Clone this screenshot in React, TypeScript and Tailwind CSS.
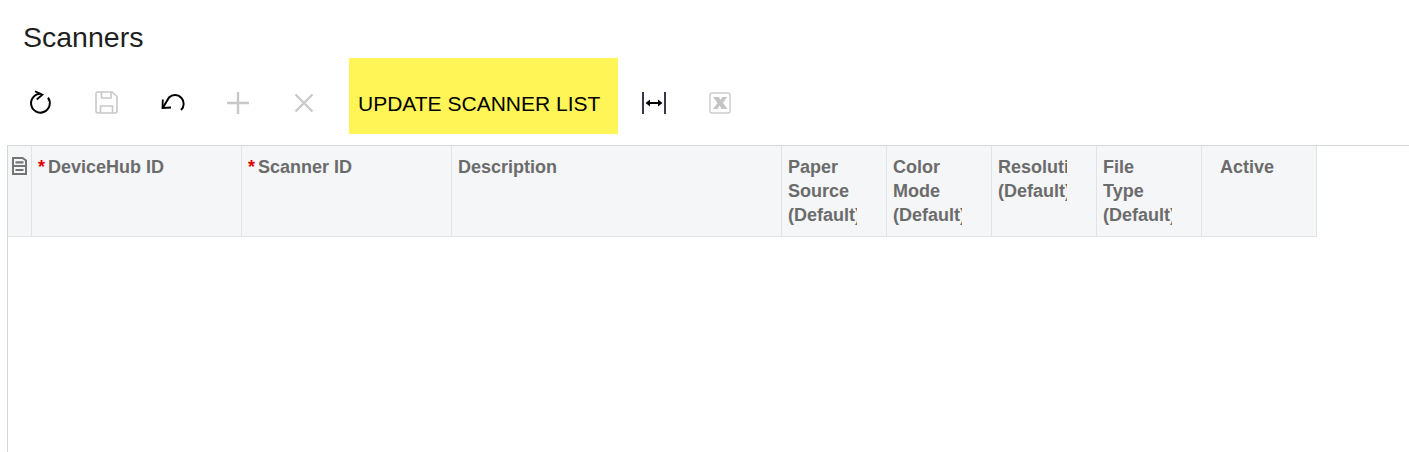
import type { ReactNode } from "react";

const font = { fontFamily: '"Liberation Sans", Arial, sans-serif' };

function ToolButton({ children }: { children: ReactNode }) {
  return <button className="flex h-[76px] w-[66px] items-center justify-center pt-[13px]">{children}</button>;
}

function RefreshIcon() {
  return (
    <svg width="24" height="26" viewBox="0 0 24 26" fill="none" stroke="#000" strokeWidth="2">
      <path d="M12.500 3.800A9.400 9.400 0 1 0 20 7.600" />
      <path d="M7 1.200l7.400 3.500-5.700 4.800" strokeWidth="1.8" />
    </svg>
  );
}

function SaveIcon() {
  return (
    <svg width="23" height="23" viewBox="0 0 23 23" fill="none" stroke="#c8c8c8" strokeWidth="1.6">
      <path d="M3 1h14l5 4.500V20a2 2 0 0 1-2 2H3a2 2 0 0 1-2-2V3a2 2 0 0 1 2-2z" />
      <path d="M6.500 1v6h9.500V1M5.500 22v-7h12v7" />
    </svg>
  );
}

function UndoIcon() {
  return (
    <svg width="26" height="22" viewBox="0 0 26 22" fill="none" stroke="#000" strokeWidth="2">
      <path d="M4 15.500L10 5.500A8.500 8.500 0 0 1 22 18" />
      <path d="M3.800 7.500L3.500 16l8.500-.5" strokeWidth="1.8" />
    </svg>
  );
}

function PlusIcon() {
  return (
    <svg width="22" height="22" viewBox="0 0 22 22" stroke="#c8c8c8" strokeWidth="2.4">
      <path d="M11 0v22M0 11h22" />
    </svg>
  );
}

function CloseIcon() {
  return (
    <svg width="20" height="20" viewBox="0 0 20 20" stroke="#c8c8c8" strokeWidth="2.2">
      <path d="M1.500 1.500l17 17M18.500 1.500l-17 17" />
    </svg>
  );
}

function FitIcon() {
  return (
    <svg width="24" height="22" viewBox="0 0 24 22" fill="none">
      <path d="M1 0v22M23 0v22" stroke="#22223a" strokeWidth="1.8" />
      <path d="M5 11h14" stroke="#000" strokeWidth="2" />
      <path d="M8 7.500L3.500 11 8 14.500zM16 7.500l4.500 3.500-4.500 3.500z" fill="#000" />
    </svg>
  );
}

function ExcelIcon() {
  return (
    <svg width="22" height="22" viewBox="0 0 22 22" fill="none">
      <rect x="1" y="1" width="20" height="20" rx="2" stroke="#cccccc" strokeWidth="1.5" />
      <path d="M4 5h6l1.500 3L13.500 5H18l-4 6 4.500 6h-6l-2-3.500L8.500 17H4l4.500-6z" fill="#c4c4c4" />
    </svg>
  );
}

function RowSelectorIcon() {
  return (
    <svg width="15" height="18" viewBox="0 0 15 18" fill="none" stroke="#757575">
      <path d="M1 1h9.500L14 3.500V17H1z" strokeWidth="2" />
      <path d="M1 9h13" strokeWidth="2" />
      <path d="M3.500 5.300h8M3.500 13h8" strokeWidth="2.200" />
    </svg>
  );
}

const columns = [
  { lines: ["Paper", "Source", "(Default)"] },
  { lines: ["Color", "Mode", "(Default)"] },
  { lines: ["Resolution", "(Default)"] },
  { lines: ["File", "Type", "(Default)"] },
];

function RequiredColumn({ label }: { label: string }) {
  return (
    <div className="w-[210px] whitespace-nowrap border-r border-[#e1e3e6] pl-[6px] pt-[9px]">
      <span className="mr-[3px] text-[#e00000]">*</span>
      {label}
    </div>
  );
}

export default function App() {
  return (
    <div className="h-[452px] w-[1409px] overflow-hidden bg-white" style={font}>
      <h1 className="pb-[1px] pl-[23px] pt-[18px] text-[28.5px] leading-[39px] text-[#1f1f1f]">Scanners</h1>

      <div className="flex pl-[7px]">
        <ToolButton><RefreshIcon /></ToolButton>
        <ToolButton><SaveIcon /></ToolButton>
        <ToolButton><UndoIcon /></ToolButton>
        <ToolButton><PlusIcon /></ToolButton>
        <ToolButton><CloseIcon /></ToolButton>
        <button className="ml-[12px] h-[76px] w-[269px] bg-[#fff557] pl-[9px] pt-[16px] text-left text-[21px] text-black">
          UPDATE SCANNER LIST
        </button>
        <div className="ml-[3px] flex">
          <ToolButton><FitIcon /></ToolButton>
          <ToolButton><ExcelIcon /></ToolButton>
        </div>
      </div>

      <div className="ml-[7px] mt-[11px] h-[307px] border-l border-t border-[#d4d6da]">
        <div className="flex h-[91px] w-fit border-b border-[#e1e3e6] bg-[#f5f6f8] text-[18px] font-bold leading-[24px] text-[#6b6b6b]">
          <div className="flex w-[24px] items-start justify-center border-r border-[#e1e3e6] pr-[1px] pt-[11px]">
            <RowSelectorIcon />
          </div>
          <RequiredColumn label="DeviceHub ID" />
          <RequiredColumn label="Scanner ID" />
          <div className="w-[330px] border-r border-[#e1e3e6] pl-[6px] pt-[9px]">Description</div>
          {columns.map((c) => (
            <div key={c.lines[0]} className="w-[105px] border-r border-[#e1e3e6] pl-[6px] pt-[9px]">
              <div className="w-[69px] overflow-hidden whitespace-nowrap">
                {c.lines.map((line) => (
                  <div key={line}>{line}</div>
                ))}
              </div>
            </div>
          ))}
          <div className="w-[115px] border-r border-[#e1e3e6] pl-[18px] pt-[9px]">Active</div>
        </div>
      </div>
    </div>
  );
}
